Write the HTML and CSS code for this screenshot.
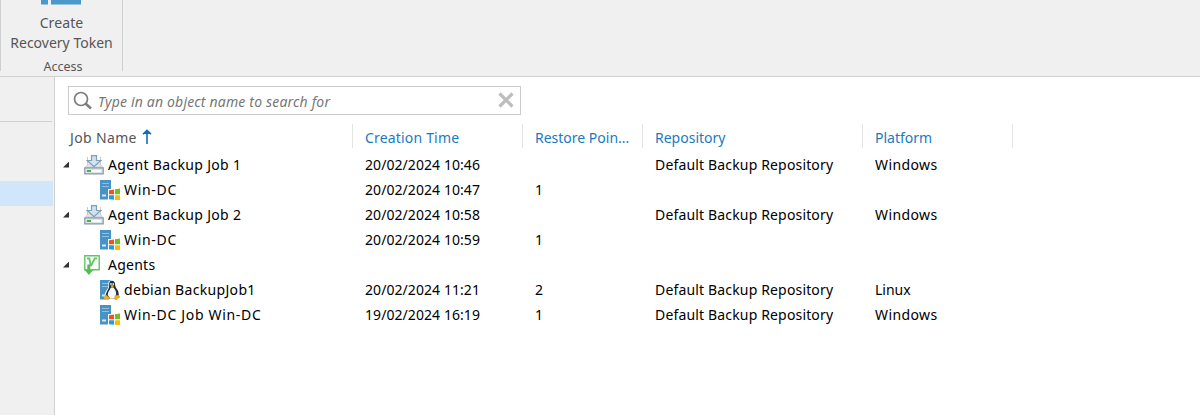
FILE: index.html
```
<!DOCTYPE html>
<html lang="en">
<head>
<meta charset="utf-8">
<title>Backups</title>
<link rel="stylesheet" href="styles.css">
</head>
<body>
<svg class="defs" aria-hidden="true">
  <defs>
    <symbol id="job" viewBox="0 0 20 20">
      <path d="M3.500 2v8M16.500 2v8" fill="none" stroke="#c3ccd2" stroke-width="1"/>
      <path d="M1.500 12 4 9h12l2.500 3z" fill="#e3e8eb" stroke="#c3ccd2" stroke-width=".8"/>
      <path d="M7.500.7h5v4.800h4.300L10 11.800 3.200 5.500h4.300z" fill="#cfe2f0" stroke="#7f9fb5" stroke-width="1.200"/>
      <path d="M.8 12.800h18.400v6H.8z" fill="#dbe3e8" stroke="#8798a4" stroke-width="1.200"/>
      <path d="M3 15h4v2H3z" fill="#3fb54b"/><path d="M7 15h10v2H7z" fill="#fafcfc"/>
    </symbol>
    <symbol id="server" viewBox="0 0 20 20">
      <path d="M0 0h11v19.500H0z" fill="#4793c5"/>
      <path d="M2 3.500h7M2 6.500h7" stroke="#8fc0df" stroke-width="1"/>
      <path d="M2 15.500h4" stroke="#d5eaf6" stroke-width="2"/>
    </symbol>
    <symbol id="windows" viewBox="0 0 20 20">
      <use href="#server"/>
      <path d="M8 9h12v11H8z" fill="#fff"/>
      <path d="m9 10.300 5-.8v4.800H9z" fill="#f4511e"/>
      <path d="m15 9.300 5-.8v5.800h-5z" fill="#75bd20"/>
      <path d="M9 15.300h5v4.500l-5-.6z" fill="#16a2e6"/>
      <path d="M15 15.300h5V20l-5-.1z" fill="#ffb900"/>
    </symbol>
    <symbol id="linux" viewBox="0 0 20 20">
      <use href="#server"/>
      <path d="M8.500 2C9 0 15 0 15.500 3c.3 2 .2 3.500 1.500 5.500 1.500 2.500 2 4.500 2 6.500l1 2-3.500 3H7l-3-1.500.5-3C4.500 12 7 10 8 8c.7-1.500.2-4 .5-6z" fill="#fff"/>
      <path d="M9.300 3c.2-3 5.400-3 5.700.5.200 2 .2 3.200 1.500 5 1.800 2.500 2.500 4.500 2.200 7.500l-3 2.500H8L5.800 15c.2-2.500 2-4.500 3-7 .5-1.500.3-3.500.5-5z" fill="#222b30"/>
      <path d="M11 7.500c-1 2-3.300 4.500-3.300 7.500l2.300 3.500h4.500c2-2.500 2-5.500 1-8-.5-1-1.500-2-2-3z" fill="#f5f7f7"/>
      <ellipse cx="11" cy="4" rx=".8" ry="1" fill="#fff"/><ellipse cx="13.200" cy="4" rx=".8" ry="1" fill="#fff"/>
      <path d="m10.300 5.800 1.900-.8 2 .8-2 1.700z" fill="#f4b61c"/>
      <path d="m5.500 14.500 4 3-1 2.300-4.500-1 .5-2.500zM15 15.500l3.500-.5 1.500 2-4 3-1.500-1z" fill="#f2ae1b" stroke="#a9780f" stroke-width=".3"/>
    </symbol>
    <symbol id="agents" viewBox="0 0 16 20">
      <path d="M2 14.800H.8V.8h14.400v14H8" fill="#fbfffb" stroke="#62c462" stroke-width="1.400"/>
      <path d="M3 3.300h2.300l1.400 7h.6l3.500-7h2.400" fill="none" stroke="#62c462" stroke-width="1.800"/>
      <path d="M3.300 9.500h3v4.700h3.500L4.900 20 0 14.200h3.300z" fill="#55bb55"/>
    </symbol>
  </defs>
</svg>
<header class="ribbon">
  <section class="ribbon-group">
    <button class="token-button">
      <svg class="token-icon" viewBox="0 0 40 5"><path d="M0 0h7v4.500H0zM10 0h30v4.500H10z" fill="#4b98ca"/></svg>
      <span class="token-top">Create</span>
      <span class="token-bottom">Recovery Token</span>
    </button>
    <span class="group-title">Access</span>
  </section>
</header>
<div class="workspace">
  <nav class="sidebar"><div class="sidebar-rule"></div><div class="sidebar-selected"></div></nav>
  <main class="content">
    <div class="search">
      <svg class="search-icon" viewBox="0 0 20 20"><circle cx="8" cy="8" r="6.500" fill="none" stroke="#7d7d7d" stroke-width="1.700"/><path d="m12.500 12.500 5.500 5" stroke="#7d7d7d" stroke-width="2.500"/></svg>
      <span class="placeholder">Type in an object name to search for</span>
      <svg class="clear-icon" viewBox="0 0 16 16"><path d="m1.500 1.500 13 13m0-13-13 13" stroke="#bdbdbd" stroke-width="3.200"/></svg>
    </div>
    <div class="grid head">
      <div class="cell name sorted"><span>Job Name</span><svg class="sort" viewBox="0 0 10 15"><path d="M5 15V2M1 5.300 5 1.300l4 4" fill="none" stroke="#0e70b8" stroke-width="1.600"/><path d="M1.500 5 5 1l3.500 4z" fill="#0e70b8"/></svg></div>
      <div class="cell created">Creation Time</div><div class="cell points">Restore Poin...</div><div class="cell">Repository</div><div class="cell">Platform</div>
    </div>
    <div class="grid"><div class="cell name"><i class="arrow"></i><svg class="icon"><use href="#job"/></svg>Agent Backup Job 1</div><div class="cell date">20/02/2024 10:46</div><div class="cell"></div><div class="cell repository">Default Backup Repository</div><div class="cell platform">Windows</div></div>
    <div class="grid"><div class="cell name child"><svg class="icon"><use href="#windows"/></svg>Win-DC</div><div class="cell date">20/02/2024 10:47</div><div class="cell">1</div><div class="cell"></div><div class="cell"></div></div>
    <div class="grid"><div class="cell name"><i class="arrow"></i><svg class="icon"><use href="#job"/></svg>Agent Backup Job 2</div><div class="cell date">20/02/2024 10:58</div><div class="cell"></div><div class="cell repository">Default Backup Repository</div><div class="cell platform">Windows</div></div>
    <div class="grid"><div class="cell name child"><svg class="icon"><use href="#windows"/></svg>Win-DC</div><div class="cell date">20/02/2024 10:59</div><div class="cell">1</div><div class="cell"></div><div class="cell"></div></div>
    <div class="grid"><div class="cell name"><i class="arrow"></i><svg class="icon agents"><use href="#agents"/></svg><span class="agents-label">Agents</span></div><div class="cell"></div><div class="cell"></div><div class="cell"></div><div class="cell"></div></div>
    <div class="grid"><div class="cell name child linux"><svg class="icon"><use href="#linux"/></svg>debian BackupJob1</div><div class="cell date">20/02/2024 11:21</div><div class="cell">2</div><div class="cell repository">Default Backup Repository</div><div class="cell">Linux</div></div>
    <div class="grid"><div class="cell name child"><svg class="icon"><use href="#windows"/></svg>Win-DC Job Win-DC</div><div class="cell date">19/02/2024 16:19</div><div class="cell">1</div><div class="cell repository">Default Backup Repository</div><div class="cell platform">Windows</div></div>
  </main>
</div>
</body>
</html>
```
FILE: styles.css
```
* { box-sizing: border-box; }
body { margin: 0; height: 415px; overflow: hidden; display: flex; flex-direction: column; background: #f0f0f0; color: #000; font: 14px/20px "Noto Sans", "Open Sans", sans-serif; }
.defs { display: none; }
svg { flex: none; }
.ribbon { height: 77px; flex: none; border-bottom: 1px solid #d0d0d0; }
.ribbon-group { width: 123px; height: 71px; border: solid #d0d0d0; border-width: 0 1px; display: flex; flex-direction: column; align-items: center; color: #555; white-space: nowrap; }
.token-button { border: 0; padding: 0; background: none; color: inherit; font: inherit; display: flex; flex-direction: column; align-items: center; height: 56px; }
.token-icon { width: 40px; height: 5px; margin-bottom: 8px; }
.token-top { height: 20px; letter-spacing: .1px; }
.group-title { flex: none; margin-left: 3px; padding-top: 4px; font-size: 12.500px; line-height: 20px; }
.workspace { display: flex; flex: 1; }
.sidebar { width: 55px; border-right: 1px solid #d0d0d0; padding-top: 44px; }
.sidebar-rule { width: 52px; height: 1px; background: #d0d0d0; }
.sidebar-selected { width: 53px; height: 25px; margin-top: 59px; background: #d0e6fa; }
.content { flex: 1; background: #fff; padding-top: 9px; }
.search { display: flex; align-items: center; width: 453px; height: 29px; margin-left: 13px; border: 1px solid #ccc; padding: 0 6px 0 4px; }
.search-icon { width: 20px; height: 20px; }
.placeholder { flex: 1; margin: 2px 0 0 5px; color: #777; font-style: italic; letter-spacing: .18px; white-space: nowrap; }
.clear-icon { width: 16px; height: 16px; margin-top: -1px; }
.grid { display: grid; grid-template-columns: 298px 170px 120px 220px 150px; height: 25px; }
.cell { padding-left: 12px; display: flex; align-items: center; white-space: nowrap; }
.date { letter-spacing: .07px; }
.repository { letter-spacing: .16px; }
.platform { letter-spacing: .4px; }
.head { height: 24px; margin: 9px 0 4px; color: #1b79bf; }
.head .cell { border-right: 1px solid #e4e4e4; padding-top: 3px; }
.head .sorted { color: #555; padding-left: 15px; letter-spacing: .35px; }
.head .created { letter-spacing: .18px; }
.sort { width: 10px; height: 15px; margin: -3px 0 0 5px; }
.name { padding-left: 8px; letter-spacing: .33px; }
.name.child { padding-left: 45px; letter-spacing: .68px; }
.name.linux { letter-spacing: .32px; }
.agents-label { letter-spacing: .25px; }
.arrow { width: 6px; height: 6px; background: #333; clip-path: polygon(100% 0, 100% 100%, 0 100%); margin-right: 15px; }
.icon { width: 20px; height: 20px; margin-right: 4px; }
.icon.agents { width: 16px; margin: 0 8px 0 0; }
```
